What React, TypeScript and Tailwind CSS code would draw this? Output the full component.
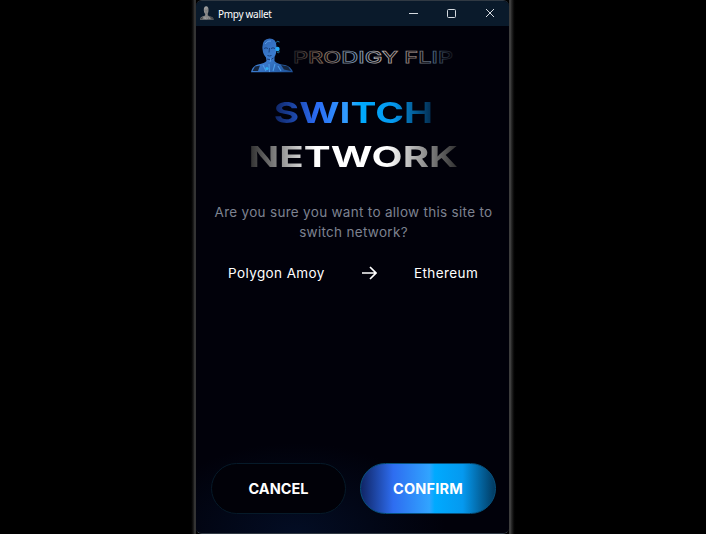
import React from "react";

const display = "font-['Inter'] font-bold whitespace-nowrap";

function RobotBust({ className, mono = false }: { className: string; mono?: boolean }) {
  const id = mono ? "bustMono" : "bustBlue";
  return (
    <svg className={className} viewBox="0 0 42 35" preserveAspectRatio={mono ? "none" : undefined} aria-hidden="true">
      <defs>
        <linearGradient id={id} x1="0" y1="0" x2="1" y2="1">
          <stop offset="0" stopColor={mono ? "#a8a8a8" : "#2a5ca6"} />
          <stop offset=".5" stopColor={mono ? "#888" : "#3b7cd0"} />
          <stop offset="1" stopColor={mono ? "#666" : "#1d4f94"} />
        </linearGradient>
      </defs>
      <path d="M0 34.200Q1 28 7 26.500Q14 25 15.500 23L15 19.500Q12 16.500 11.500 11Q10.500 1 18.500 .5Q26 .5 25.500 10Q25.500 16 23.500 19V23Q26 26 34 27Q40 28.500 42 34.200Z" fill={`url(#${id})`} />
      <path d="M1.500 33L4 28.500L9 27.500L7 33ZM30 27L37 28.500L40 33L33 31.500Z" fill={mono ? "#444" : "#14243c"} />
      <path d="M13 10.500Q15 9 17 10.500M20 10.500Q22 9 24 10.500M18.500 10L18 14.500M16.500 17.500Q18.500 18.500 20.500 17.500M16 21Q19 23 22.500 20" stroke={mono ? "#555" : "#173f7c"} strokeWidth="1" fill="none" />
      <path d="M14 6Q17 2 20 3M20 20L19 24" stroke={mono ? "#bbb" : "#5a9be6"} strokeWidth="1" fill="none" />
      <path d="M12 27L15 33M24 26L22 33M18 26L18.500 34M27 28L30 33" stroke={mono ? "#bbb" : "#4b9bea"} strokeWidth="1.100" />
      <circle cx="16" cy="30.500" r="1.600" fill={mono ? "#aaa" : "#2fb0f2"} />
      {!mono && (
        <>
          <path d="M24.500 5Q26 2 28.500 4M26 14Q28.500 16 28 13" stroke="#257eac" strokeWidth=".9" fill="none" />
          <circle cx="26.500" cy="11" r="2.200" fill="#25aaf4" />
        </>
      )}
    </svg>
  );
}

function TitleBar() {
  return (
    <header className="flex h-[25px] shrink-0 items-center bg-[#0a1a2b] pl-[4px] text-white">
      <RobotBust className="mb-[2px] h-[14px] w-[14px]" mono />
      <span className="ml-[4px] font-['Noto_Sans'] text-[10px] leading-none tracking-[-0.3px]">Pmpy wallet</span>
      <svg className="mr-[13px] ml-auto h-[10px] w-[87px]" viewBox="0 0 87 10" fill="none" stroke="#d5dae0" aria-hidden="true">
        <path d="M0 4.500H9" />
        <rect x="38.500" y=".5" width="8" height="8" rx="1" />
        <path d="M77 0L85 8M85 0L77 8" />
      </svg>
    </header>
  );
}

export default function App() {
  return (
    <div className="flex h-[534px] w-[706px] justify-center overflow-hidden bg-black font-['Inter',sans-serif]">
      <div className="w-[4px] bg-linear-to-r from-black to-[#242424]" />
      <div className="w-[2px] bg-[#333]" />
      <main className="flex h-[534px] w-[313px] flex-col overflow-hidden rounded-[6px] border-t border-b border-[#303943] bg-[#01010a]">
        <TitleBar />
        <section className="flex grow flex-col bg-[radial-gradient(ellipse_150px_90px_at_32%_100%,#030d24_0%,#01010a_100%)]">
          <div className="mt-[12px] ml-[55px] flex h-[36px] items-center">
            <RobotBust className="mb-[1px] h-[35px] w-[42px]" />
            <svg className="h-[20px] w-[164px]" viewBox="0 0 164 20" aria-hidden="true">
              <defs>
                <linearGradient id="brand">
                  <stop offset="0" stopColor="#26262b" />
                  <stop offset=".2" stopColor="#8a6f5c" />
                  <stop offset=".38" stopColor="#7593b2" />
                  <stop offset=".55" stopColor="#b5adaa" />
                  <stop offset=".75" stopColor="#8a7771" />
                  <stop offset=".88" stopColor="#4a627a" />
                  <stop offset="1" stopColor="#15151c" />
                </linearGradient>
              </defs>
              <text x="0" y="16.500" textLength="160" lengthAdjust="spacingAndGlyphs" fontFamily="Inter" fontWeight="500" fontSize="16.500" fill="#020208" stroke="url(#brand)" strokeWidth=".75">PRODIGY FLIP</text>
            </svg>
          </div>
          <h1 className="mt-[17px] flex flex-col items-center text-[29px] leading-[44px]">
            <span className={`${display} translate-x-[1px] scale-x-[1.34] bg-[linear-gradient(90deg,#0f2462_0%,#2b6cf5_27%,#31a4ff_49%,#00aaff_54%,#0599ef_75%,#03294a_100%)] bg-clip-text text-transparent`}>SWITCH</span>
            <span className={`${display} translate-x-[1px] scale-x-[1.39] bg-[linear-gradient(90deg,#2c2c2c_0%,#ffffff_32%,#ffffff_66%,#2c2c2c_100%)] bg-clip-text text-transparent`}>NETWORK</span>
          </h1>
          <p className="mt-[23px] pl-[2px] text-center text-[13.5px] leading-[20px] tracking-[0.3px] text-[#7d8290]">
            Are you sure you want to allow this site to<br />switch network?
          </p>
          <div className="mt-[21px] flex h-[20px] items-center pl-[32px] text-[13.5px] tracking-[0.4px] text-white">
            <span className="w-[134px] whitespace-nowrap">Polygon Amoy</span>
            <svg className="h-[14px] w-[15px]" viewBox="0 0 15 14" fill="none" stroke="white" strokeWidth="1.700" aria-hidden="true"><path d="M0 7H14M8 1L14 7L8 13" /></svg>
            <span className="ml-[37px]">Ethereum</span>
          </div>
          <div className="mt-auto mb-[19px] flex gap-[14px] pr-[13px] pl-[15px] text-[14.5px] font-bold text-white">
            <button className="h-[51px] w-[135px] rounded-full border border-[#061a29] bg-[#010108] pt-[1px]">CANCEL</button>
            <button className="h-[51px] w-[136px] rounded-full border border-[#07517d] bg-[linear-gradient(90deg,#102565_0%,#2e6df0_24%,#31a4ff_51%,#00aaff_55%,#0599ef_76%,#023a60_100%)] pt-[1px] tracking-[0.2px]">CONFIRM</button>
          </div>
        </section>
      </main>
      <div className="w-[2px] bg-[#3d3d3d]" />
      <div className="w-[5px] bg-linear-to-r from-[#303030] to-black" />
    </div>
  );
}
